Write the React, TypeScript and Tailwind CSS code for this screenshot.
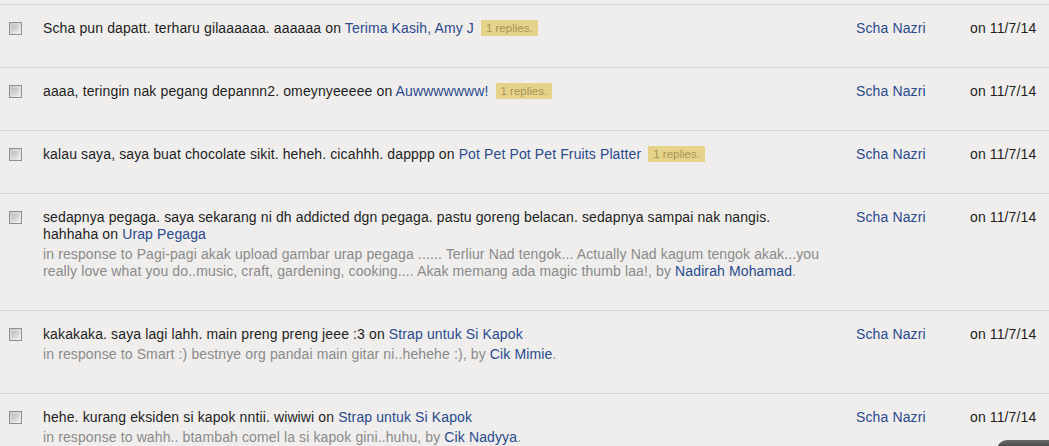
import React from 'react';

type Row = {
  text: string;
  post: string;
  replies?: boolean;
  response?: string;
  by?: string;
};

const rows: Row[] = [
  { text: 'Scha pun dapatt. terharu gilaaaaaa. aaaaaa', post: 'Terima Kasih, Amy J', replies: true },
  { text: 'aaaa, teringin nak pegang depannn2. omeynyeeeee', post: 'Auwwwwwww!', replies: true },
  { text: 'kalau saya, saya buat chocolate sikit. heheh. cicahhh. dapppp', post: 'Pot Pet Pot Pet Fruits Platter', replies: true },
  {
    text: 'sedapnya pegaga. saya sekarang ni dh addicted dgn pegaga. pastu goreng belacan. sedapnya sampai nak nangis. hahhaha',
    post: 'Urap Pegaga',
    response:
      'Pagi-pagi akak upload gambar urap pegaga ...... Terliur Nad tengok... Actually Nad kagum tengok akak...you really love what you do..music, craft, gardening, cooking.... Akak memang ada magic thumb laa!',
    by: 'Nadirah Mohamad',
  },
  {
    text: 'kakakaka. saya lagi lahh. main preng preng jeee :3',
    post: 'Strap untuk Si Kapok',
    response: 'Smart :) bestnye org pandai main gitar ni..hehehe :)',
    by: 'Cik Mimie',
  },
  {
    text: 'hehe. kurang eksiden si kapok nntii. wiwiwi',
    post: 'Strap untuk Si Kapok',
    response: 'wahh.. btambah comel la si kapok gini..huhu',
    by: 'Cik Nadyya',
  },
];

const Checkbox = () => (
  <div className="mt-[2px] h-[13px] w-[13px] border border-[#8f8f8f] bg-gradient-to-br from-[#c9c9c9] to-[#f2f2f2] p-[2px]">
    <div className="h-full w-full bg-gradient-to-br from-[#bdbdbd] to-[#e6e6e6]" />
  </div>
);

export default function App() {
  return (
    <div
      className="relative h-[446px] w-full overflow-hidden bg-[#efeeec] text-[14px] leading-[17px] tracking-[0.12px] text-[#1e1e1e]"
      style={{ fontFamily: '"Liberation Sans", Arial, sans-serif' }}
    >
      <div className="h-[4px]" />
      {rows.map((r, i) => (
        <div key={i} className="flex border-t border-[#d4d4d2] pt-[15px] pb-[30px]">
          <div className="w-[43px] shrink-0 pl-[9px]">
            <Checkbox />
          </div>
          <div className="w-[780px] shrink-0">
            <div>
              {r.text} on <span className="text-[#2a4a8e]">{r.post}</span>
              {r.replies && (
                <span className="ml-[7px] inline-block bg-[#e6d38b] px-[5px] align-[1px] text-[11.5px] leading-[16px] tracking-normal text-[#a89354]">
                  1 replies.
                </span>
              )}
            </div>
            {r.response && (
              <div className="mt-[3px] text-[#8a8a8a]">
                in response to {r.response}, by <span className="text-[#2a4a8e]">{r.by}</span>.
              </div>
            )}
          </div>
          <div className="ml-[33px] w-[114px] shrink-0 text-[#2a4a8e]">Scha Nazri</div>
          <div className="shrink-0">on 11/7/14</div>
        </div>
      ))}
      <div className="absolute bottom-[-6px] right-0 h-[12px] w-[52px] rounded-tl-[10px] bg-gradient-to-b from-[#6b6b6b] to-[#2e2e2e]" />
    </div>
  );
}
